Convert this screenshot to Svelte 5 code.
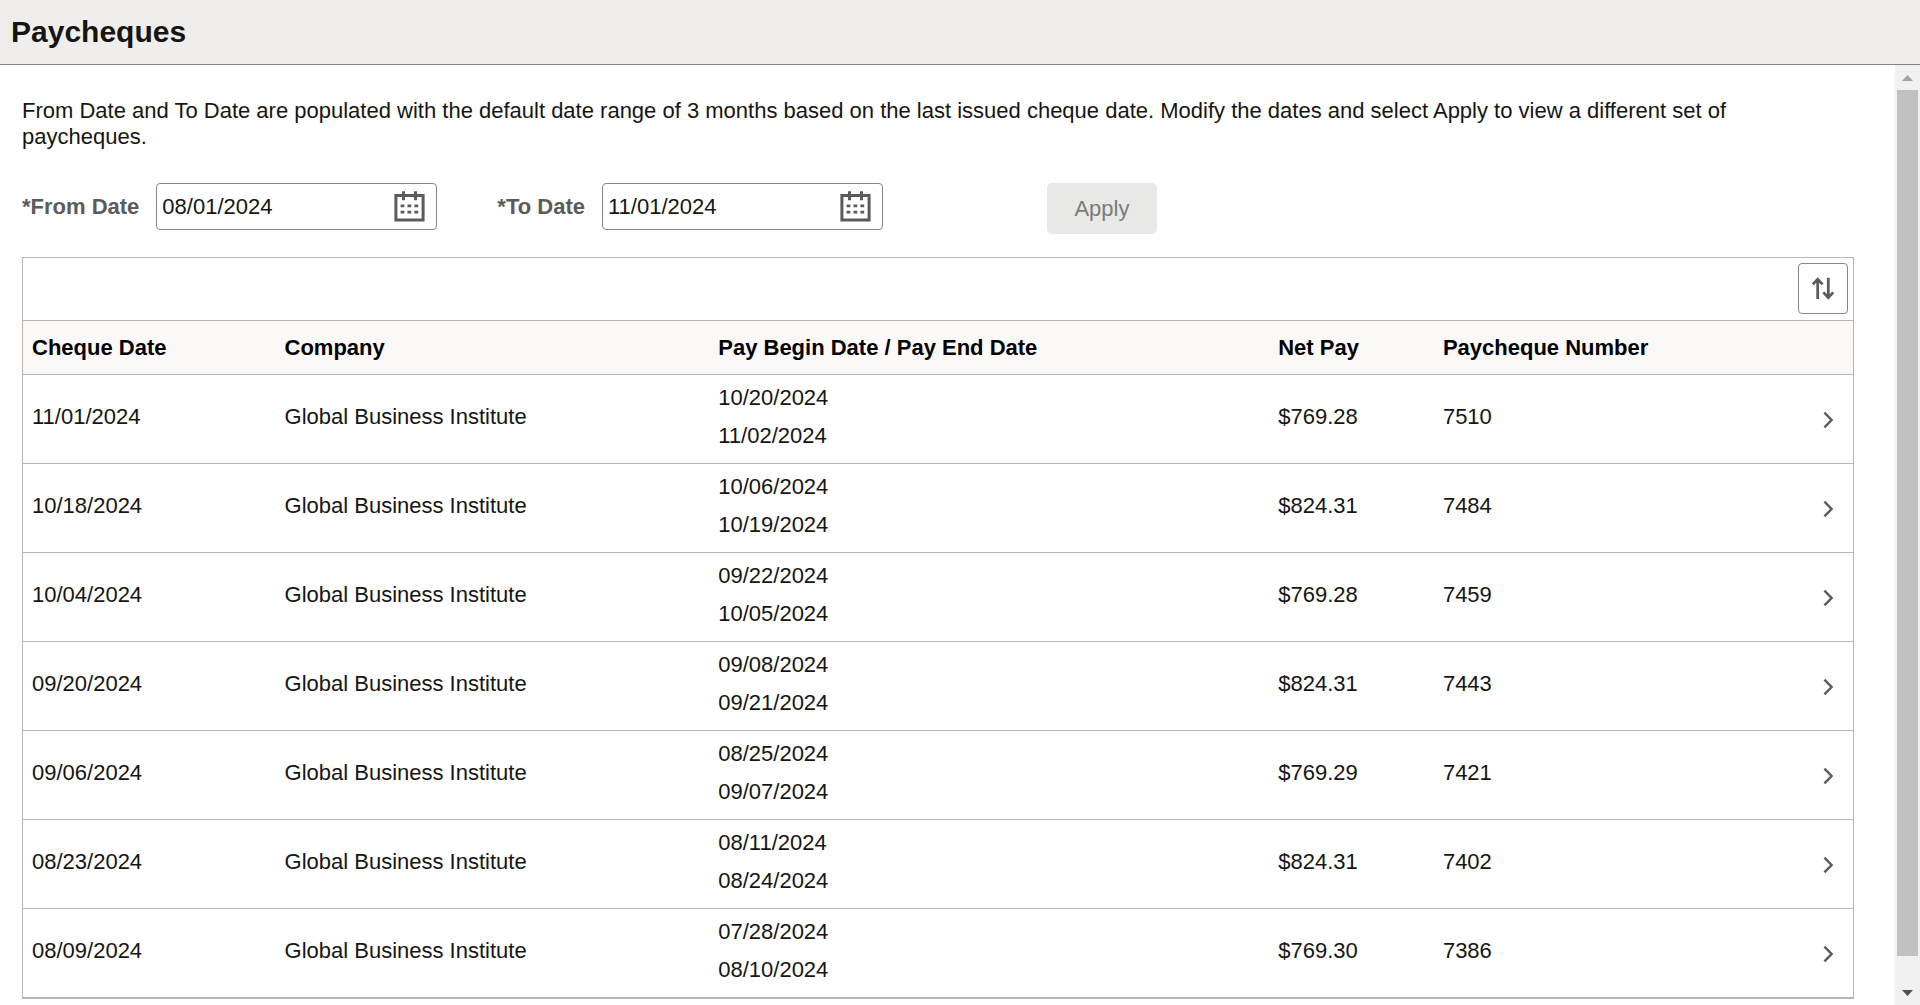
<script lang="ts">
  interface Paycheque {
    date: string;
    company: string;
    begin: string;
    end: string;
    netPay: string;
    number: string;
  }

  const company = 'Global Business Institute';

  let paycheques = $state<Paycheque[]>([
    { date: '11/01/2024', company, begin: '10/20/2024', end: '11/02/2024', netPay: '$769.28', number: '7510' },
    { date: '10/18/2024', company, begin: '10/06/2024', end: '10/19/2024', netPay: '$824.31', number: '7484' },
    { date: '10/04/2024', company, begin: '09/22/2024', end: '10/05/2024', netPay: '$769.28', number: '7459' },
    { date: '09/20/2024', company, begin: '09/08/2024', end: '09/21/2024', netPay: '$824.31', number: '7443' },
    { date: '09/06/2024', company, begin: '08/25/2024', end: '09/07/2024', netPay: '$769.29', number: '7421' },
    { date: '08/23/2024', company, begin: '08/11/2024', end: '08/24/2024', netPay: '$824.31', number: '7402' },
    { date: '08/09/2024', company, begin: '07/28/2024', end: '08/10/2024', netPay: '$769.30', number: '7386' },
  ]);

  let fromDate = $state('08/01/2024');
  let toDate = $state('11/01/2024');
  let appliedFrom = $state('08/01/2024');
  let appliedTo = $state('11/01/2024');
  let unchanged = $derived(fromDate === appliedFrom && toDate === appliedTo);

  let pane: HTMLElement | undefined = $state();
  let viewHeight = $state(0);
  let fullHeight = $state(0);
  let scrollTop = $state(0);

  // Scrollbar thumb, in percent of the track
  let thumbSize = $derived(fullHeight ? (viewHeight / fullHeight) * 100 : 100);
  let thumbTop = $derived(fullHeight ? (scrollTop / fullHeight) * 100 : 0);

  $effect(() => {
    if (pane && viewHeight) {
      fullHeight = pane.scrollHeight;
    }
  });

  function apply() {
    appliedFrom = fromDate;
    appliedTo = toDate;
  }

  function reverseOrder() {
    paycheques.reverse();
  }

  function scrollPane(amount: number) {
    pane?.scrollBy({ top: amount });
  }
</script>

{#snippet calendarIcon()}
  <svg width="31" height="31" viewBox="0 0 31 31" aria-hidden="true">
    <path d="M1.9 4.6H29.1V28.9H1.9Z" fill="none" stroke="#5b5b5b" stroke-width="3" />
    <path d="M9.5 0.3V9.3M21.5 0.3V9.3" stroke="#5b5b5b" stroke-width="3" />
    <path d="M6.6 14.8H24.4M6.6 21.2H24.4" stroke="#5b5b5b" stroke-width="2.8" stroke-dasharray="3.8 3.1" />
  </svg>
{/snippet}

<div class="page">
  <header>
    <h1>Paycheques</h1>
  </header>

  <div class="body">
    <main
      bind:this={pane}
      bind:clientHeight={viewHeight}
      onscroll={() => (scrollTop = pane?.scrollTop ?? 0)}
    >
      <p>
        From Date and To Date are populated with the default date range of 3 months based on the last
        issued cheque date. Modify the dates and select Apply to view a different set of paycheques.
      </p>

      <div class="filters">
        <div class="field">
          <label for="from-date">*From Date</label>
          <div class="date-box">
            <input id="from-date" type="text" bind:value={fromDate} />
            <button class="calendar-btn" aria-label="Select From Date">{@render calendarIcon()}</button>
          </div>
        </div>
        <div class="field">
          <label for="to-date">*To Date</label>
          <div class="date-box">
            <input id="to-date" type="text" bind:value={toDate} />
            <button class="calendar-btn" aria-label="Select To Date">{@render calendarIcon()}</button>
          </div>
        </div>
        <button class="apply-btn" disabled={unchanged} onclick={apply}>Apply</button>
      </div>

      <section class="grid">
        <div class="toolbar">
          <button class="sort-btn" aria-label="Sort" onclick={reverseOrder}>
            <svg width="24" height="24" viewBox="0 0 24 24" aria-hidden="true">
              <path
                d="M6.7 22V3M1.8 7.4L6.7 2.2L11.6 7.4M17.3 0.8V20M12.4 15.4L17.3 20.6L22.2 15.4"
                fill="none"
                stroke="#5b5b5b"
                stroke-width="2.8"
              />
            </svg>
          </button>
        </div>

        <table>
          <colgroup>
            <col class="col-date" />
            <col class="col-company" />
            <col class="col-period" />
            <col class="col-pay" />
            <col />
            <col class="col-open" />
          </colgroup>
          <thead>
            <tr>
              <th>Cheque Date</th>
              <th>Company</th>
              <th>Pay Begin Date / Pay End Date</th>
              <th>Net Pay</th>
              <th>Paycheque Number</th>
              <th></th>
            </tr>
          </thead>
          <tbody>
            {#each paycheques as cheque (cheque.number)}
              <tr>
                <td>{cheque.date}</td>
                <td>{cheque.company}</td>
                <td class="period">
                  <div>{cheque.begin}</div>
                  <div>{cheque.end}</div>
                </td>
                <td>{cheque.netPay}</td>
                <td>{cheque.number}</td>
                <td class="open">
                  <button class="open-btn" aria-label="View paycheque {cheque.number}">
                    <svg width="12" height="18" viewBox="0 0 12 18" aria-hidden="true">
                      <path d="M1.4 1.6L8.6 9L1.4 16.4" fill="none" stroke="#5b5b5b" stroke-width="2.4" />
                    </svg>
                  </button>
                </td>
              </tr>
            {/each}
          </tbody>
        </table>
      </section>
    </main>

    <div class="scrollbar">
      <button class="scroll-arrow" aria-label="Scroll up" onclick={() => scrollPane(-40)}>
        <svg width="11" height="6" viewBox="0 0 11 6" aria-hidden="true">
          <path d="M0 6L5.5 0L11 6Z" fill={scrollTop > 0 ? '#505050' : '#a3a3a3'} />
        </svg>
      </button>
      <div class="track">
        <div class="thumb" style="height: {thumbSize}%; margin-top: {thumbTop}%"></div>
      </div>
      <button class="scroll-arrow" aria-label="Scroll down" onclick={() => scrollPane(40)}>
        <svg width="11" height="6" viewBox="0 0 11 6" aria-hidden="true">
          <path d="M0 0L5.5 6L11 0Z" fill="#505050" />
        </svg>
      </button>
    </div>
  </div>
</div>

<style>
  :global(body) {
    margin: 0;
    background-color: #ffffff;
  }

  .page {
    display: flex;
    flex-direction: column;
    height: 100vh;
    font-family: "Liberation Sans", Arial, sans-serif;
    font-size: 22px;
    line-height: 26px;
    color: #161513;
  }

  header {
    padding: 15px 11px;
    background-color: #f0eeec;
    border-bottom: 1px solid #8b8580;
  }

  h1 {
    margin: 0;
    font-size: 30px;
    line-height: 34px;
  }

  button,
  input {
    font: inherit;
    color: inherit;
  }

  button {
    padding: 0;
    border: none;
    background: none;
    cursor: pointer;
  }

  svg {
    display: block;
  }

  .body {
    display: flex;
    flex: 1;
    min-height: 0;
  }

  main {
    flex: 1;
    min-width: 0;
    padding: 33px 41px 32px 22px;
    overflow-y: auto;
    scrollbar-width: none;
  }

  p {
    margin: 0;
  }

  .filters {
    display: flex;
    align-items: flex-start;
    gap: 60px;
    margin-top: 33px;
    margin-bottom: 23px;
  }

  .field {
    display: flex;
    align-items: center;
    gap: 17px;
  }

  label {
    font-weight: bold;
    color: #5b5b5b;
  }

  .date-box {
    display: flex;
    align-items: center;
    box-sizing: border-box;
    width: 281px;
    height: 47px;
    padding-right: 11px;
    border: 1px solid #8b8580;
    border-radius: 4px;
  }

  input {
    flex: 1;
    min-width: 0;
    padding: 0 5px;
    border: none;
    outline: none;
    background: none;
  }

  .apply-btn {
    width: 110px;
    height: 51px;
    margin-left: 104px;
    border-radius: 5px;
    background-color: #e8e8e6;
  }

  .apply-btn:disabled {
    color: #7b7b7a;
    cursor: default;
  }

  .grid {
    border: 1px solid #bab5b0;
  }

  .toolbar {
    display: flex;
    justify-content: flex-end;
    padding: 5px 5px 6px;
    border-bottom: 1px solid #bab5b0;
  }

  .sort-btn {
    display: flex;
    align-items: center;
    justify-content: center;
    box-sizing: border-box;
    width: 50px;
    height: 51px;
    border: 1px solid #8b8580;
    border-radius: 4px;
  }

  table {
    width: 100%;
    table-layout: fixed;
    border-collapse: separate;
    border-spacing: 0;
  }

  .col-date {
    width: 13.8%;
  }

  .col-company {
    width: 23.7%;
  }

  .col-period {
    width: 30.6%;
  }

  .col-pay {
    width: 9%;
  }

  .col-open {
    width: 48px;
  }

  th,
  td {
    text-align: left;
    vertical-align: middle;
    border-bottom: 1px solid #bab5b0;
  }

  th {
    padding: 14px 9px 13px;
    background-color: #faf9f7;
    color: #000000;
  }

  td {
    padding: 4px 9px 8px;
  }

  .period {
    line-height: 38px;
  }

  .open {
    padding: 8px 0 6px;
  }

  .open-btn {
    display: flex;
    justify-content: center;
    width: 100%;
  }

  .scrollbar {
    display: flex;
    flex-direction: column;
    width: 25px;
    background-color: #f1f1f1;
  }

  .scroll-arrow {
    display: flex;
    align-items: center;
    justify-content: center;
    height: 25px;
  }

  .track {
    flex: 1;
    min-height: 0;
    padding: 0 2px;
  }

  .thumb {
    background-color: #c1c1c1;
  }
</style>
